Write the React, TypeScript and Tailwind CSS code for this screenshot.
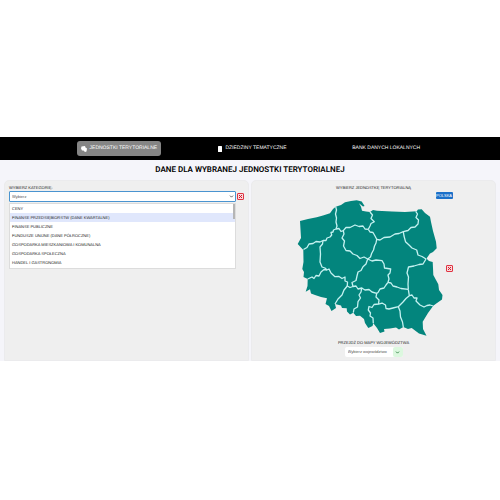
import React from "react";
import { ChevronDown } from "lucide-react";

const categories = [
  "CENY",
  "FINANSE PRZEDSIĘBIORSTW (DANE KWARTALNE)",
  "FINANSE PUBLICZNE",
  "FUNDUSZE UNIJNE (DANE PÓŁROCZNE)",
  "GOSPODARKA MIESZKANIOWA I KOMUNALNA",
  "GOSPODARKA SPOŁECZNA",
  "HANDEL I GASTRONOMIA",
];

const outline =
  "M300 221 L308 219 316.7 217.3 323 215.5 330 213.3 333 209 335.7 206.7 341 205 345 202.3 351 201 356.7 200.3 361.7 201.5 364.6 206 363 206.5 359 203.3 361 206.7 362 210.7 366 211.6 370 212 373 210 377 210.7 392 211.5 405 212 416.7 211.3 418 209.6 421.7 209.3 425 213 430 216.7 431 222 433 231 436 241.7 436.7 248.3 433 252 430 253.5 426.5 258.5 429 261 432.7 262 433 268 433.3 275 436 280 438.3 284.3 439 290 442.5 295 442 299.5 437 303 433.3 305.7 428 313 422.7 321.7 423 329 426.5 335.7 419 333.5 411.7 328 408 329 403.3 327 399 329.5 396 327.5 390 328.5 384 329 384.5 331.5 380 333 377 328 373.3 323.3 372.5 326 368.3 328 365 323 364 319 360 315.7 356 316 353.3 312.7 350 314.5 347 311.5 346.7 308.3 342 308 341 305.5 335 304 336 308 331.5 311 329 306 325.5 304 327 298.3 321 297 315 295 311 293.5 310 289.3 305.7 291.7 307.5 286 307.7 279 303.5 277 304 272 302.3 269 303.5 262 303.3 250 297.7 244 301 238 Z";

const borders = [
  "M335.7 206.7 L336.5 210 335.5 214 336.5 218 336 222 337 226 336 229",
  "M336 229 L333.5 230 333 232 331 232.5 331.7 235 330 237 327 238 326 240.5 323 240.5",
  "M323 240.5 L320 242 316 241.5 313 243.5 309 244 307 247.5 303.5 249.5",
  "M323 240.5 L322.5 244 320 247 320.5 254 320 262 322 267 325 268 327 270",
  "M327 270 L324 269.5 321 272 319 276 316 275.5 314 278.5 312 277 307.7 279",
  "M327 270 L329 269 331 273 335 276.7 339 276.5 342 278.5 345 277 345 281 347.5 282 347.3 286",
  "M347.3 286 L344 290 342 295 338 299 335 304",
  "M347.3 286 L350 287.5 353 286.5 L352 282.5 356 280.5 357 276 358 272 361 270.5 363 266.7 366 264 367.7 259",
  "M353 286.5 L356 286 358 289 361.7 288 361 292 359 295 360.5 298 358 301.7 357.5 307 354 309 353.3 312.7",
  "M361.7 288 L365 290 369 289.5 372 292 376.7 293.3 376 297 379 300 378.5 304 374 304.5 372 307.5 369 306.5 368.3 310 370.5 313 370 316 373 318 373.3 323.3",
  "M336 229 L339 228.5 341 231.5 343.3 230.7 346 227.5 350 227.5 355 225 359 226.5 363 226 365 229 368.3 229.3",
  "M368.3 229.3 L370 226 371 223.5 374.3 221.7 371 218.5 372.5 215 370 212",
  "M368.3 229.3 L370 232 373 232.5 375 236 376.7 239.3 376 243 374.5 246 373.5 250 371.7 253.3 370.5 257 367.7 259",
  "M343.3 230.7 L344 234 342 238 344.5 241 343.5 246 346 250.5 350 251 353 254 357 255.5 360 258.5 364 257 367.7 259",
  "M367.7 259 L372 261 376 260 382 260.7 384 264 384.5 268 390.7 269 390 273 388 275 389 279 388 282.3",
  "M388 282.3 L386 285 384 288 380 289 378 292.5 376.7 293.3",
  "M388 282.3 L391 283 393 286 397 287 401 288.5 408.3 289.3",
  "M408.3 289.3 L408 284 408.5 277 407 273 408.5 267 414 266 419 264.5 423 264 426 259",
  "M408.3 289.3 L409.3 295.7 406 298.5 403 302 398.3 306.7 393 308 389 309 386 308.5 385.5 305 382 303 378.5 304",
  "M398.3 306.7 L400 311 400.5 317 402.5 322 403.3 327",
  "M409.3 295.7 L412 295 414 298 417 298 416 301 420 305 424 307 427 305.5 430 305 433.3 306",
  "M376.7 239.3 L380 240 384 237.5 390 237 395 234 399 233.5 403.3 231.7 408 230.5 411 227.5 415 227 418 224 418.5 220 416 217.5 417.5 214 415.7 211.3",
  "M403.3 231.7 L404 236 405.5 241.7 409 245 412 248 416.7 250 418 255 422 256.5 426 259",
];

function ClearButton({ label }: { label: string }) {
  return (
    <button type="button" aria-label={label} className="block size-[7px] shrink-0">
      <svg viewBox="0 0 14 14" className="block size-full">
        <rect x="1" y="1" width="12" height="12" rx="1" fill="#f7dada" stroke="#e03343" strokeWidth="2" />
        <path d="M4 4 L10 10 M10 4 L4 10" stroke="#d3172b" strokeWidth="2" />
      </svg>
    </button>
  );
}

function RegionMap() {
  return (
    <svg viewBox="295 195 150 143" className="h-[143px] w-[150px]" role="img" aria-label="Mapa Polski">
      <path d={outline} fill="#03857d" />
      <g fill="none" stroke="#c5f2f1" strokeWidth="1.3" strokeLinejoin="round">
        {borders.map((d) => (
          <path key={d} d={d} />
        ))}
      </g>
    </svg>
  );
}

export default function App() {
  return (
    <div className="bg-white pt-[137px] font-['Liberation_Sans',Roboto,sans-serif] text-[4px] leading-[9px] text-[#222] [text-rendering:geometricPrecision]">
      <nav className="grid h-[23px] grid-cols-3 items-center bg-black pr-[47px] pl-[52px] text-[5px] text-white">
        <a href="#jednostki" className="flex h-[15px] items-center justify-center gap-[3px] justify-self-center rounded-[3px] bg-[#858585] px-1 whitespace-nowrap">
          <svg viewBox="0 0 12 12" className="size-[6px]" fill="white">
            <path d="M1 1 L8 0 9 3 12 5 11 11 8 12 5 9 2 9 0 5 Z" />
          </svg>
          JEDNOSTKI TERYTORIALNE
        </a>
        <a href="#dziedziny" className="flex items-center gap-[3px] justify-self-center">
          <svg viewBox="0 0 8 12" className="h-[6px] w-1" fill="white">
            <rect width="8" height="12" rx="1" />
          </svg>
          DZIEDZINY TEMATYCZNE
        </a>
        <a href="#bank" className="justify-self-center">BANK DANYCH LOKALNYCH</a>
      </nav>

      <main className="bg-[#f5f5fa]">
        <h1 className="h-5 text-center font-['Roboto',sans-serif] text-[8px] leading-5 font-semibold text-black">
          DANE DLA WYBRANEJ JEDNOSTKI TERYTORIALNEJ
        </h1>
        <div className="grid grid-cols-2 gap-[2px] px-1">
          <section className="rounded-t-[5px] border border-[#ebebed] bg-[#efefef] px-1 pt-[2px]">
            <label htmlFor="category" className="block h-2">WYBIERZ KATEGORIĘ:</label>
            <div className="flex items-center gap-[1px]">
              <div className="relative min-w-0 flex-1">
                <select id="category" className="block h-[11px] w-full appearance-none rounded-[1px] border border-[#4a94d0] bg-white px-[2px] text-[4px] leading-[9px] text-[#555]">
                  <option>Wybierz</option>
                </select>
                <ChevronDown className="pointer-events-none absolute top-[3px] right-[2px] size-[5px] text-[#444]" strokeWidth={4} />
                <ul role="listbox" aria-label="Kategorie" className="absolute top-3 right-0 left-0 border border-[#dcdcdc] bg-white pb-[1px]">
                  {categories.map((name, i) => (
                    <li key={name} role="option" aria-selected={i === 1} className={i === 1 ? "bg-[#e0e7fc] px-[2px]" : "px-[2px]"}>
                      {name}
                    </li>
                  ))}
                  <li aria-hidden="true" className="absolute top-0 right-0 h-[15px] w-[2px] bg-[#b5b5b5]" />
                </ul>
              </div>
              <ClearButton label="Wyczyść kategorię" />
            </div>
          </section>

          <section className="rounded-t-[5px] border border-[#ebebed] bg-[#efefef] pt-[2px] pb-[3px]">
            <p className="text-center">WYBIERZ JEDNOSTKĘ TERYTORIALNĄ</p>
            <div className="grid grid-cols-[1fr_150px_1fr] pt-[3px] pr-2">
              <div />
              <RegionMap />
              <div className="relative pl-[1px]">
                <button type="button" className="absolute -top-[3px] -left-[9px] h-[7px] w-[17px] rounded-[1px] bg-[#1b70c9] text-center leading-[7px] text-white">
                  POLSKA
                </button>
                <div className="pt-[70px]">
                  <ClearButton label="Wyczyść jednostkę" />
                </div>
              </div>
            </div>
            <div className="flex flex-col items-center">
              <label htmlFor="region">PRZEJDŹ DO MAPY WOJEWÓDZTWA</label>
              <div className="relative w-[58px]">
                <select id="region" className="block h-[10px] w-full appearance-none rounded-[2px] bg-white px-[3px] text-[4px] leading-[10px] text-[#555]">
                  <option>Wybierz województwo</option>
                </select>
                <span className="pointer-events-none absolute top-0 right-0 flex h-[10px] w-[10px] items-center justify-center rounded-[2px] bg-[#dcf8df]">
                  <ChevronDown className="size-[5px] text-[#277a3a]" strokeWidth={4} />
                </span>
              </div>
            </div>
          </section>
        </div>
      </main>
    </div>
  );
}
